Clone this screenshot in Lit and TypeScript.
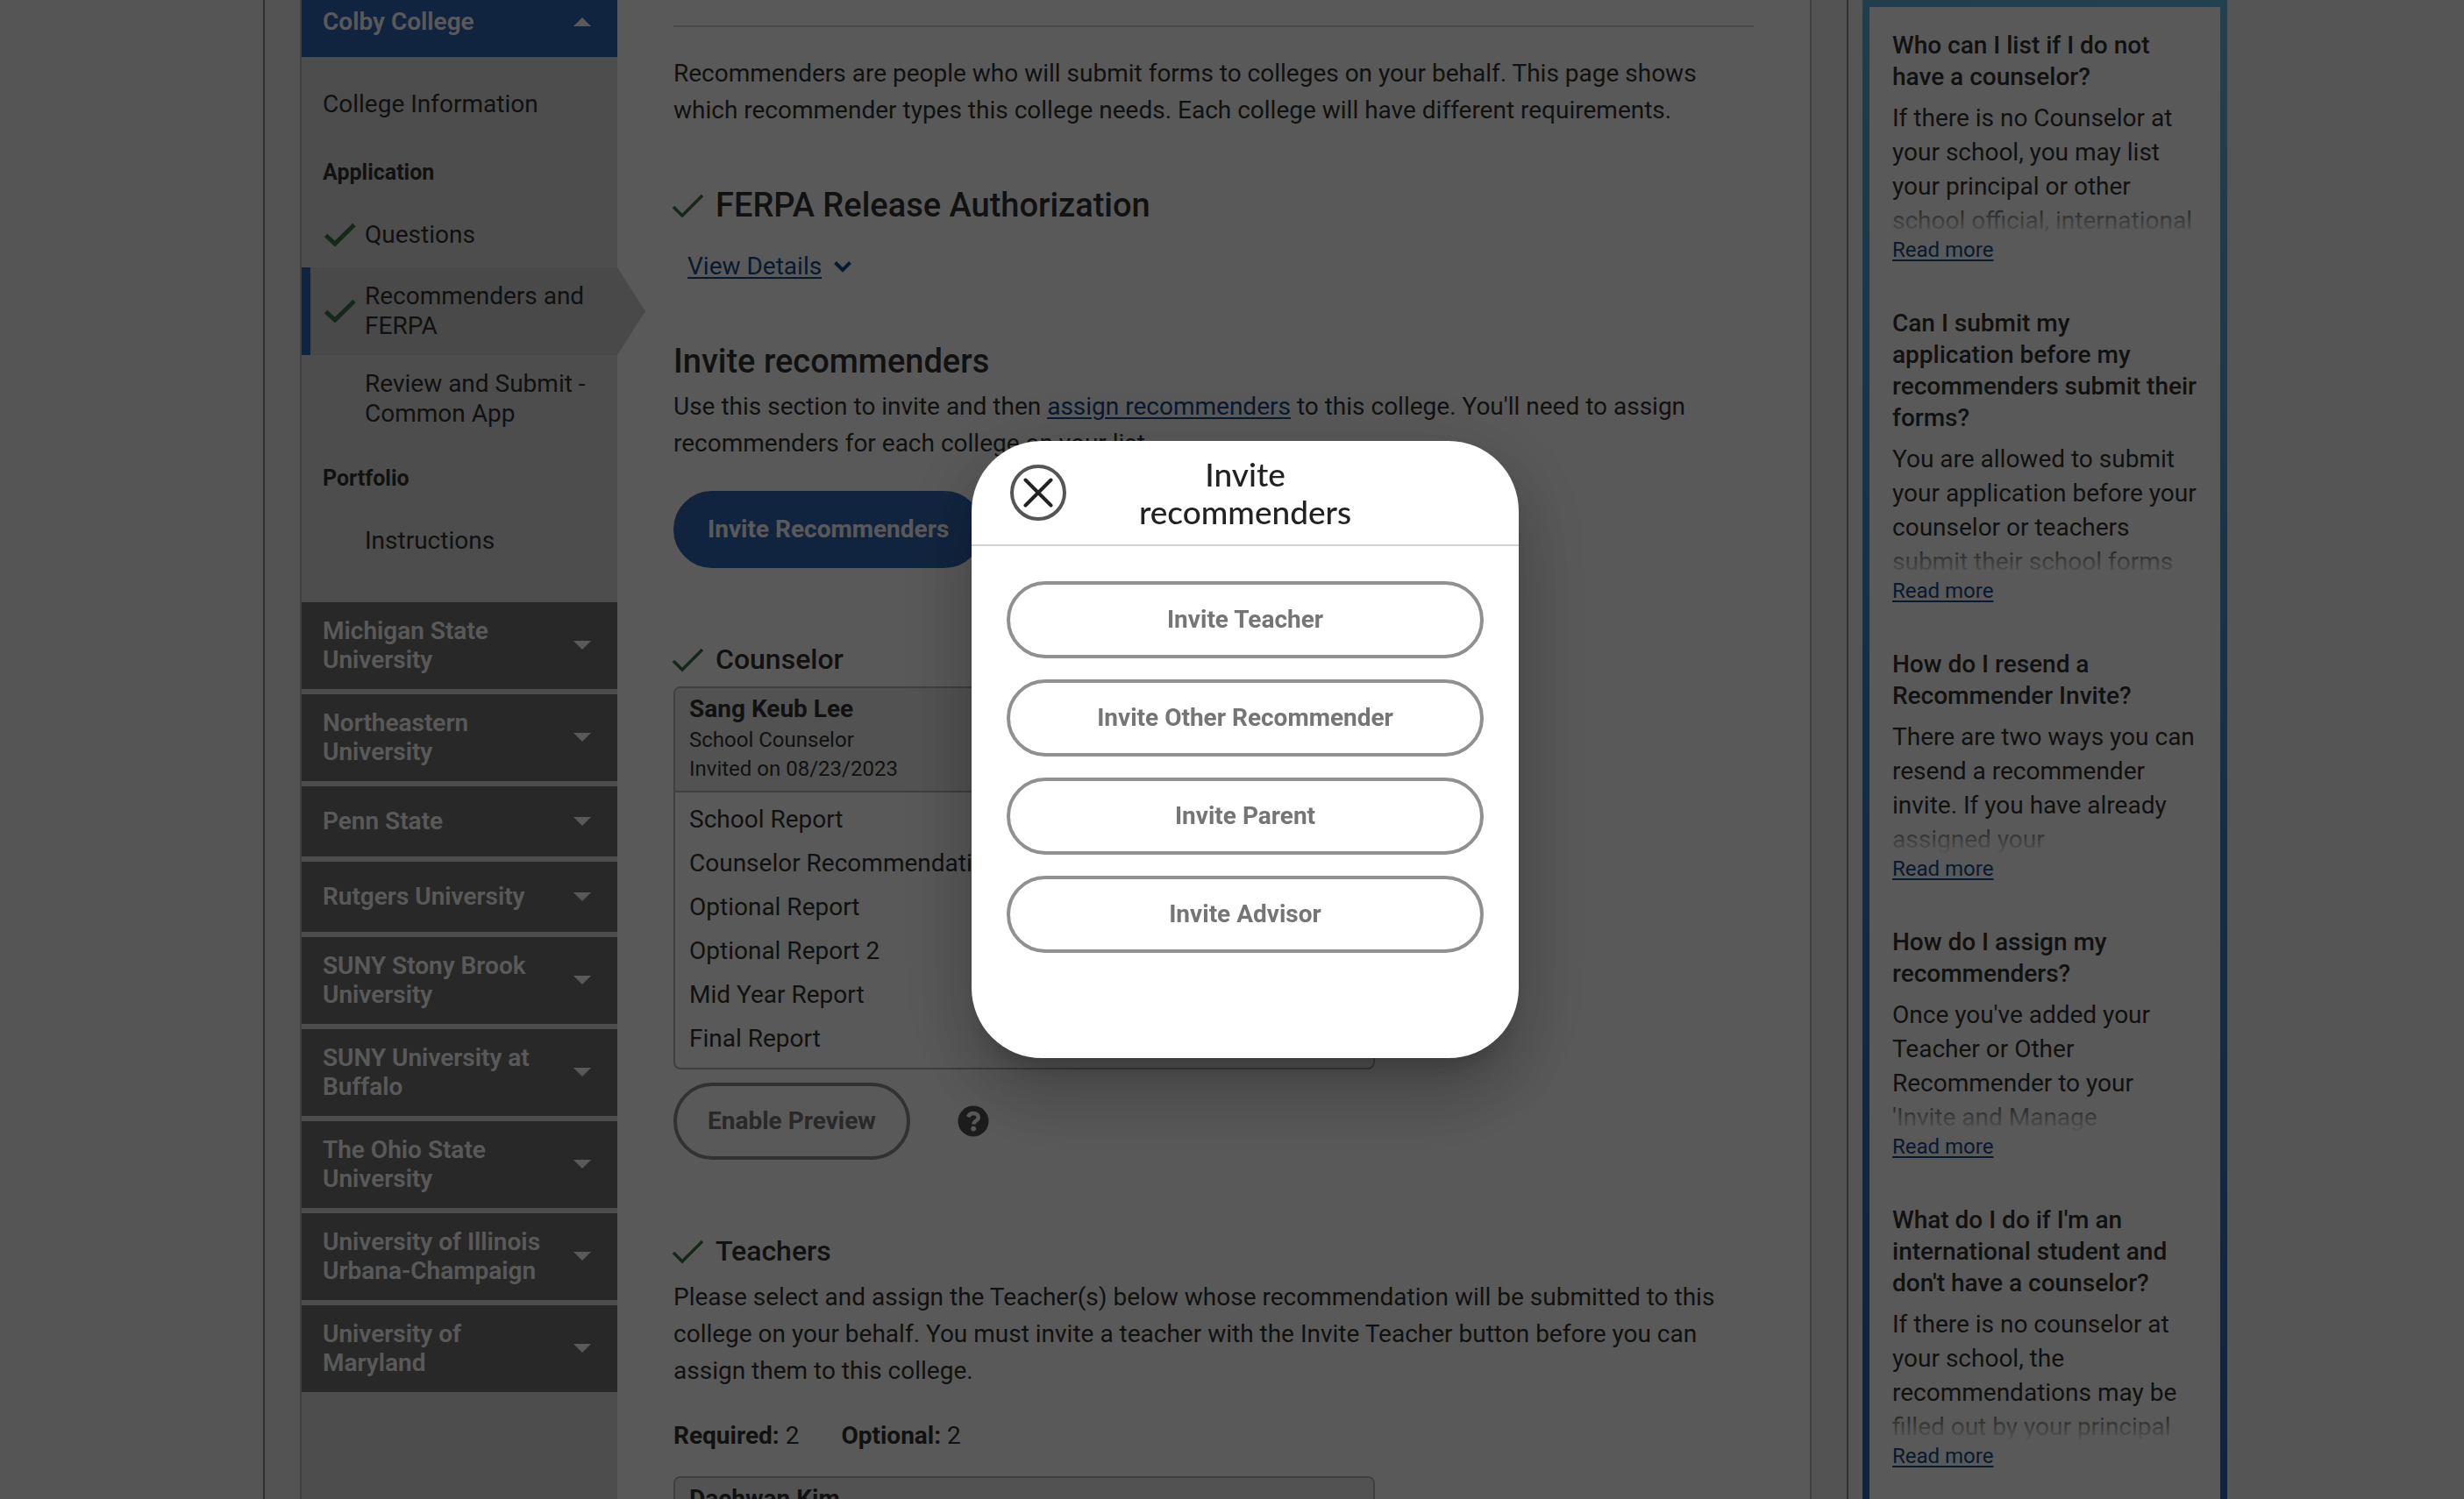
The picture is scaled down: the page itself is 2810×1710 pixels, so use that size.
import { LitElement, html, css, svg } from "lit";
import { customElement, property } from "lit/decorators.js";
import { classMap } from "lit/directives/class-map.js";

interface Faq {
  question: string;
  answer: string;
}

const COLLEGES = [
  "Michigan State University",
  "Northeastern University",
  "Penn State",
  "Rutgers University",
  "SUNY Stony Brook University",
  "SUNY University at Buffalo",
  "The Ohio State University",
  "University of Illinois Urbana-Champaign",
  "University of Maryland",
];

const COUNSELOR_FORMS = [
  "School Report",
  "Counselor Recommendation",
  "Optional Report",
  "Optional Report 2",
  "Mid Year Report",
  "Final Report",
];

const INVITES = [
  "Invite Teacher",
  "Invite Other Recommender",
  "Invite Parent",
  "Invite Advisor",
];

const FAQS: Faq[] = [
  {
    question: "Who can I list if I do not have a counselor?",
    answer:
      "If there is no Counselor at your school, you may list your principal or other school official, international",
  },
  {
    question: "Can I submit my\napplication before my recommenders submit their forms?",
    answer:
      "You are allowed to submit your application before your counselor or teachers submit their school forms",
  },
  {
    question: "How do I resend a Recommender Invite?",
    answer:
      "There are two ways you can resend a recommender invite. If you have already assigned your",
  },
  {
    question: "How do I assign my recommenders?",
    answer:
      "Once you've added your Teacher or Other Recommender to your 'Invite and Manage",
  },
  {
    question: "What do I do if I'm an international student and don't have a counselor?",
    answer:
      "If there is no counselor at your school, the recommendations may be filled out by your principal",
  },
];

const base = css`
  *,
  *::before,
  *::after {
    box-sizing: border-box;
  }
  h1, h2, h3, h4, p, ul {
    margin: 0;
    padding: 0;
  }
  ul {
    list-style: none;
  }
  button {
    font: inherit;
    cursor: pointer;
  }
  a {
    color: #174a83;
    text-decoration: underline;
    text-decoration-thickness: 2px;
    text-underline-offset: 3px;
  }
  svg {
    display: block;
    flex: none;
  }
`;

/* Green tick, bold in the navigation and thin beside section titles. */
@customElement("done-mark")
export class DoneMark extends LitElement {
  @property({ type: Boolean }) bold = false;

  static styles = css`
    :host {
      display: block;
      flex: none;
      width: 36px;
      height: 28px;
    }
    .mark {
      display: block;
      fill: none;
      stroke: #3b7549;
      stroke-width: 3.5;
    }
    .bold {
      stroke-width: 5;
    }
  `;

  render() {
    return html`<svg
      class=${classMap({ mark: true, bold: this.bold })}
      width="36"
      height="28"
      viewBox="0 0 36 28"
      aria-hidden="true"
      overflow="visible"
    >
      ${this.bold
        ? svg`<path d="M1.5 14.5 L12 24 L34 2.5" />`
        : svg`<path d="M0 16 L10 26 L33 3" />`}
    </svg>`;
  }
}

@customElement("college-nav")
export class CollegeNav extends LitElement {
  static styles = [
    base,
    css`
      :host {
        display: block;
        flex: none;
        width: 360px;
        background: #dcdcdc;
      }
      .college {
        display: flex;
        align-items: center;
        justify-content: space-between;
        width: 100%;
        min-height: 80px;
        padding: 16px 30px 17px 24px;
        border: 0;
        background: #737373;
        color: #fff;
        font-weight: 600;
        line-height: 33px;
        text-align: left;
      }
      .name {
        max-width: 250px;
      }
      .open {
        margin-top: -15px;
        background: #3367b4;
      }
      .caret {
        fill: #fff;
      }
      .sections {
        padding: 17px 0 33px;
      }
      .item {
        display: flex;
        align-items: center;
        min-height: 74px;
        padding: 16px 24px;
        color: #333;
        line-height: 34px;
        text-decoration: none;
      }
      .label {
        display: flex;
        align-items: center;
        height: 75px;
        padding: 6px 24px 0;
        font-size: 25px;
        font-weight: 700;
      }
      .slot {
        flex: none;
        width: 48px;
        padding-left: 2px;
      }
      .current {
        position: relative;
        background: #d1d1d1;
      }
      .current::before {
        content: "";
        position: absolute;
        inset: 0 auto 0 0;
        width: 10px;
        background: #3367b4;
      }
      .current::after {
        content: "";
        position: absolute;
        top: 0;
        bottom: 0;
        left: 100%;
        width: 32px;
        background: #d1d1d1;
        clip-path: polygon(0 0, 100% 50%, 0 100%);
      }
      .list {
        display: grid;
        gap: 6px;
      }
    `,
  ];

  private caret(up: boolean) {
    return html`<svg class="caret" width="20" height="10" viewBox="0 0 20 10" aria-hidden="true">
      ${up ? svg`<path d="M0 10 L10 0 L20 10 Z" />` : svg`<path d="M0 0 L10 10 L20 0 Z" />`}
    </svg>`;
  }

  private step(text: string, done: boolean, current = false) {
    return html`<a
      href="#"
      class=${classMap({ item: true, current })}
      aria-current=${current ? "page" : "false"}
    >
      <span class="slot">${done ? html`<done-mark bold></done-mark>` : ""}</span>
      <span>${text}</span>
    </a>`;
  }

  render() {
    return html`
      <nav aria-label="My colleges">
        <button class="college open" aria-expanded="true">
          <span class="name">Colby College</span>${this.caret(true)}
        </button>
        <div class="sections">
          <a class="item" href="#">College Information</a>
          <h4 class="label">Application</h4>
          ${this.step("Questions", true)}
          ${this.step("Recommenders and FERPA", true, true)}
          ${this.step("Review and Submit - Common App", false)}
          <h4 class="label">Portfolio</h4>
          ${this.step("Instructions", false)}
        </div>
        <ul class="list">
          ${COLLEGES.map(
            (name) => html`<li>
              <button class="college" aria-expanded="false">
                <span class="name">${name}</span>${this.caret(false)}
              </button>
            </li>`
          )}
        </ul>
      </nav>
    `;
  }
}

@customElement("recommender-page")
export class RecommenderPage extends LitElement {
  static styles = [
    base,
    css`
      :host {
        display: block;
        flex: 1;
        min-width: 0;
        padding: 29px 64px 0;
        background: #fff;
      }
      .intro {
        padding-top: 32px;
        border-top: 2px solid #d6d6d6;
      }
      .title {
        display: flex;
        align-items: center;
        gap: 12px;
        font-weight: 500;
      }
      .large {
        font-size: 38px;
        line-height: 48px;
      }
      .small {
        font-size: 32px;
        line-height: 40px;
      }
      .ferpa {
        margin-top: 63px;
      }
      .details {
        display: flex;
        align-items: center;
        gap: 14px;
        margin: 25px 0 63px 16px;
      }
      .chevron {
        fill: none;
        stroke: #174a83;
        stroke-width: 4;
      }
      .invite-text {
        margin-top: 7px;
      }
      .pill {
        height: 88px;
        padding: 0 35px;
        border: 4px solid #909090;
        border-radius: 44px;
        background: transparent;
        color: #757575;
        font-weight: 700;
      }
      .primary {
        margin-top: 33px;
        border-color: #3367b4;
        background: #3367b4;
        color: #fff;
      }
      .counselor {
        margin-top: 84px;
      }
      .card {
        max-width: 800px;
        border: 2px solid #b4b4b4;
        border-radius: 8px;
        overflow: hidden;
      }
      .card-head {
        padding: 7px 16px 8px;
        background: #ececec;
        font-size: 24px;
        line-height: 33px;
      }
      .person {
        margin-bottom: 3px;
        font-size: 28px;
        font-weight: 700;
      }
      .forms {
        padding: 6px 16px 8px;
        border-top: 2px solid #b4b4b4;
        line-height: 50px;
      }
      .preview {
        display: flex;
        align-items: center;
        gap: 54px;
        margin-top: 15px;
      }
      .help {
        padding: 0;
        border: 0;
        background: none;
      }
      .first-card {
        margin-top: 11px;
      }
      .teachers {
        margin-top: 84px;
      }
      .teachers-text {
        margin-top: 12px;
      }
      .counts {
        display: flex;
        gap: 48px;
        margin: 32px 0 25px;
      }
    `,
  ];

  render() {
    return html`
      <p class="intro">
        Recommenders are people who will submit forms to colleges on your behalf. This page shows
        which recommender types this college needs. Each college will have different requirements.
      </p>

      <h2 class="title large ferpa"><done-mark></done-mark>FERPA Release Authorization</h2>
      <div class="details">
        <a href="#">View Details</a>
        <svg class="chevron" width="20" height="14" viewBox="0 0 20 14" aria-hidden="true">
          <path d="M1.5 2.5 L10 11 L18.5 2.5" />
        </svg>
      </div>

      <h2 class="title large">Invite recommenders</h2>
      <p class="invite-text">
        Use this section to invite and then <a href="#">assign recommenders</a> to this college.
        You'll need to assign recommenders for each college on your list.
      </p>
      <button class="pill primary">Invite Recommenders</button>

      <h3 class="title small counselor"><done-mark></done-mark>Counselor</h3>
      <section class="card first-card">
        <header class="card-head">
          <p class="person">Sang Keub Lee</p>
          <p>School Counselor</p>
          <p>Invited on 08/23/2023</p>
        </header>
        <ul class="forms">
          ${COUNSELOR_FORMS.map((form) => html`<li>${form}</li>`)}
        </ul>
      </section>
      <div class="preview">
        <button class="pill">Enable Preview</button>
        <button class="help" aria-label="Help with preview">
          <svg width="36" height="36" viewBox="0 0 36 36" aria-hidden="true">
            <circle cx="18" cy="18" r="17.5" fill="#505050" />
            <path
              d="M12 13.2 C13.2 10.4 15.2 9 18 9 C21.4 9 23.8 11 23.8 13.8 C23.8 17.6 18.4 17.4 18.4 21.4"
              fill="none"
              stroke="#fff"
              stroke-width="4.4"
            />
            <circle cx="18.2" cy="26.6" r="2.9" fill="#fff" />
          </svg>
        </button>
      </div>

      <h3 class="title small teachers"><done-mark></done-mark>Teachers</h3>
      <p class="teachers-text">
        Please select and assign the Teacher(s) below whose recommendation will be submitted to this
        college on your behalf. You must invite a teacher with the Invite Teacher button before you
        can assign them to this college.
      </p>
      <p class="counts">
        <span><b>Required:</b> 2</span>
        <span><b>Optional:</b> 2</span>
      </p>
      <section class="card">
        <header class="card-head">
          <p class="person">Daehwan Kim</p>
        </header>
      </section>
    `;
  }
}

@customElement("help-panel")
export class HelpPanel extends LitElement {
  static styles = [
    base,
    css`
      :host {
        display: block;
        flex: none;
        width: 416px;
        margin-left: 16px;
        padding: 8px 8px 0;
        background: linear-gradient(200deg, #64bae0, #3f86c8 50%, #3367b4 90%);
      }
      .panel {
        min-height: 100%;
        padding: 26px 24px 0 26px;
        background: #fff;
      }
      .question {
        font-size: 28px;
        font-weight: 500;
        line-height: 36px;
        white-space: pre-line;
      }
      .answer {
        position: relative;
        height: 155px;
        margin-top: 9px;
        overflow: hidden;
        line-height: 39px;
      }
      .answer::after {
        content: "";
        position: absolute;
        inset: auto 0 0;
        height: 46px;
        background: linear-gradient(rgba(255, 255, 255, 0), #fff);
      }
      .more {
        margin-bottom: 51px;
        font-size: 24px;
        line-height: 30px;
      }
    `,
  ];

  render() {
    return html`<aside class="panel" aria-label="Help">
      ${FAQS.map(
        (faq) => html`
          <h4 class="question">${faq.question}</h4>
          <p class="answer">${faq.answer}</p>
          <p class="more"><a href="#">Read more</a></p>
        `
      )}
    </aside>`;
  }
}

@customElement("invite-dialog")
export class InviteDialog extends LitElement {
  static styles = [
    base,
    css`
      :host {
        position: fixed;
        inset: 0;
        display: flex;
        align-items: center;
        justify-content: center;
        padding-left: 30px;
        background: rgba(0, 0, 0, 0.65);
      }
      .dialog {
        width: 624px;
        border-radius: 80px;
        background: #fff;
        box-shadow:
          0 22px 30px -14px rgba(0, 0, 0, 0.2),
          0 48px 76px 6px rgba(0, 0, 0, 0.14),
          0 18px 92px 16px rgba(0, 0, 0, 0.12);
      }
      .head {
        display: grid;
        grid-template-columns: 64px 260px 64px;
        align-items: center;
        justify-content: space-between;
        height: 120px;
        padding: 0 44px;
        border-bottom: 2px solid #d2d2d2;
      }
      .close {
        display: grid;
        place-items: center;
        width: 64px;
        height: 64px;
        padding: 0;
        border: 4px solid #555;
        border-radius: 50%;
        background: #fff;
      }
      .heading {
        color: #222;
        font-family: Lato, "Open Sans", sans-serif;
        font-size: 37px;
        font-weight: 500;
        line-height: 43px;
        text-align: center;
      }
      .choices {
        display: grid;
        gap: 24px;
        padding: 40px 40px 120px;
      }
      .choice {
        height: 88px;
        border: 4px solid #909090;
        border-radius: 44px;
        background: #fff;
        color: #757575;
        font-weight: 700;
      }
    `,
  ];

  render() {
    return html`<section class="dialog" role="dialog" aria-modal="true" aria-labelledby="heading">
      <header class="head">
        <button class="close" aria-label="Close">
          <svg width="34" height="34" viewBox="0 0 34 34" aria-hidden="true">
            <path
              d="M2.5 2.5 L31.5 31.5 M31.5 2.5 L2.5 31.5"
              fill="none"
              stroke="#222"
              stroke-width="4"
              stroke-linecap="round"
            />
          </svg>
        </button>
        <h2 class="heading" id="heading">Invite recommenders</h2>
      </header>
      <div class="choices">
        ${INVITES.map((label) => html`<button class="choice">${label}</button>`)}
      </div>
    </section>`;
  }
}

@customElement("app-root")
export class AppRoot extends LitElement {
  static styles = [
    base,
    css`
      :host {
        display: block;
        box-sizing: border-box;
        height: 100vh;
        padding-left: 30px;
        overflow: hidden;
        background: #f4f4f4;
        color: #333;
        font-family: Roboto, "Liberation Sans", sans-serif;
        font-size: 28px;
        line-height: 42px;
      }
      .page {
        display: flex;
        max-width: 2240px;
        height: 100%;
        margin: 0 auto;
      }
      .frame {
        display: flex;
        flex: 1;
        min-width: 0;
        padding: 0 40px;
        border: solid #8c8c8c;
        border-width: 0 2px;
        background: #eeeeee;
      }
      .content {
        display: flex;
        flex: 1;
        min-width: 0;
        border: solid #b7b7b7;
        border-width: 0 2px;
      }
    `,
  ];

  render() {
    return html`
      <div class="page">
        <div class="frame">
          <main class="content">
            <college-nav></college-nav>
            <recommender-page></recommender-page>
          </main>
        </div>
        <help-panel></help-panel>
      </div>
      <invite-dialog></invite-dialog>
    `;
  }
}
